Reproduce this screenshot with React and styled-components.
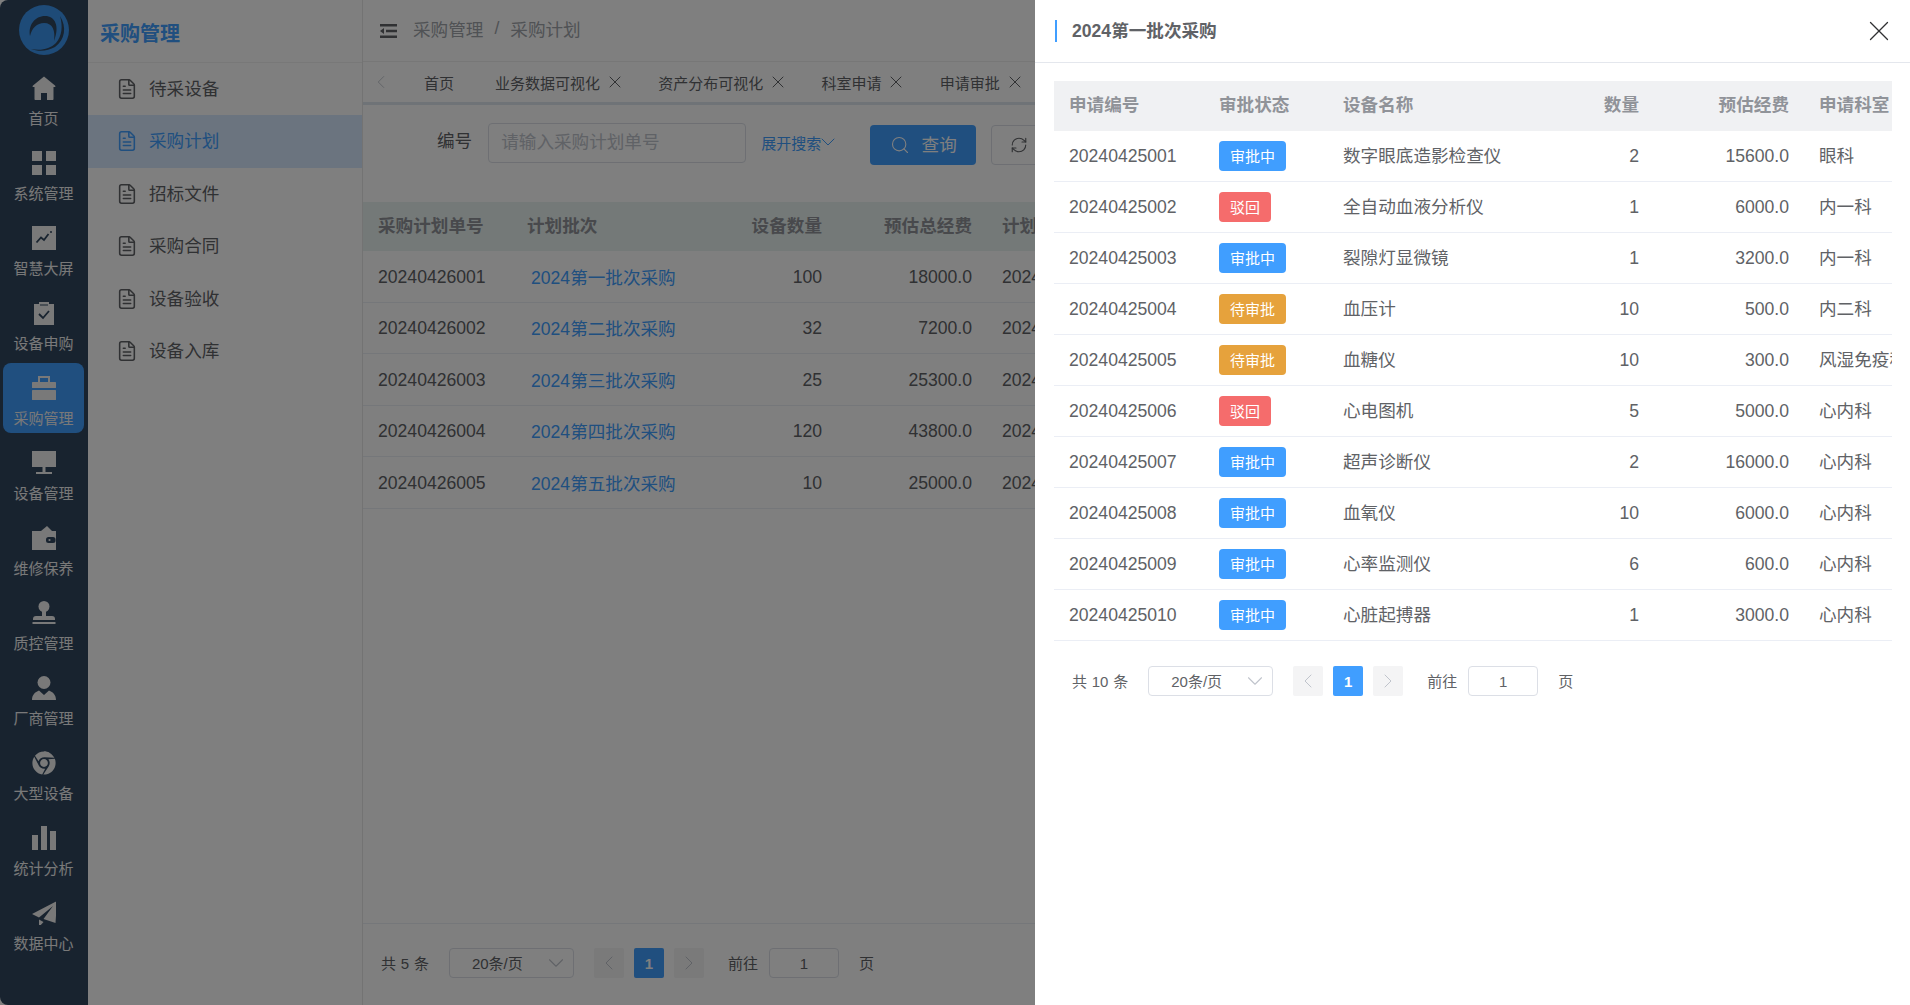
import React from 'react';
import styled, { createGlobalStyle } from 'styled-components';
import { ChevronDown, ChevronLeft, ChevronRight, FileText, RefreshCw, Search, X } from 'lucide-react';
import { FaChrome } from 'react-icons/fa';

const GlobalStyle = createGlobalStyle`
  html, body {
    margin: 0;
    padding: 0;
    height: 100%;
    overflow: hidden;
    background: #fff;
  }
  * { box-sizing: border-box; }
  body {
    font-family: "Liberation Sans", "Noto Sans CJK SC", sans-serif;
    color: #606266;
  }
`;

const Page = styled.div`
  display: flex;
  width: 100vw;
  height: 100vh;
  overflow: hidden;
`;

const Sidebar = styled.aside`
  flex: 0 0 88px;
  background: #30465e;
  border-radius: 8px 0 0 8px;
`;

const LogoWrap = styled.div`
  height: 63px;
  padding: 5px 0 0 19px;
`;

const NavItem = styled.div`
  height: 70px;
  margin: 0 4px 5px 3px;
  padding-top: 13px;
  border-radius: 8px;
  display: flex;
  flex-direction: column;
  align-items: center;
  color: #f2f2f2;
  background: ${props => (props.$active ? '#409eff' : 'transparent')};

  svg {
    width: 24px;
    height: 24px;
    fill: currentColor;
    display: block;
  }
`;

const NavLabel = styled.span`
  margin-top: 9px;
  font-size: 15px;
  line-height: 20px;
  white-space: nowrap;
`;

const SubMenu = styled.nav`
  flex: 0 0 275px;
  border-right: 1px solid #e6e6e6;
`;

const SubTitle = styled.div`
  height: 62.5px;
  padding: 4px 0 0 12px;
  display: flex;
  align-items: center;
  font-size: 20px;
  font-weight: 700;
  color: #409eff;
  border-bottom: 1px solid #f0f0f0;
`;

const SubItem = styled.div`
  height: 52.5px;
  padding-left: 28px;
  display: flex;
  align-items: center;
  gap: 11px;
  font-size: 17.6px;
  color: ${props => (props.$active ? '#409eff' : '#606266')};
  background: ${props => (props.$active ? '#d6e9ff' : 'transparent')};

  span { padding-bottom: 3px; }
`;

const Main = styled.main`
  flex: 1;
  min-width: 0;
  display: flex;
  flex-direction: column;
`;

const TopBar = styled.header`
  height: 62px;
  flex: none;
  padding-left: 17px;
  display: flex;
  align-items: center;
  gap: 16px;
  border-bottom: 1px solid #eee;
`;

const Crumbs = styled.div`
  display: flex;
  align-items: center;
  gap: 11px;
  padding-bottom: 4px;
  font-size: 17.6px;
  color: #a0a4aa;
`;

const Tabs = styled.div`
  height: 43px;
  flex: none;
  padding-left: 7px;
  display: flex;
  align-items: center;
  font-size: 15px;
  border-bottom: 3px solid #dfe6ef;
  white-space: nowrap;
  color: #606266;
`;

const TabArrow = styled.span`
  display: flex;
  width: 54px;
  color: #c0c4cc;
`;

const Tab = styled.span`
  display: flex;
  align-items: center;
  gap: 5px;
  margin-right: ${props => (props.$home ? '41px' : '33.2px')};
`;

const SearchBar = styled.div`
  height: 97px;
  flex: none;
  padding: 18px 0 0 74px;
  display: flex;
  align-items: flex-start;
`;

const FieldLabel = styled.label`
  height: 40px;
  line-height: 37px;
  margin-right: 16px;
  font-size: 17.6px;
`;

const TextField = styled.div`
  width: 258px;
  height: 40px;
  padding: 0 0 5px 12px;
  display: flex;
  align-items: center;
  font-size: 17.6px;
  color: #c0c4cc;
  border: 1px solid #dcdfe6;
  border-radius: 4px;
`;

const Expand = styled.span`
  width: 109px;
  height: 38px;
  margin-left: 15px;
  display: flex;
  align-items: center;
  font-size: 15px;
  color: #409eff;

  svg { margin-left: -5px; }
`;

const SearchButton = styled.button`
  width: 106px;
  height: 40px;
  margin-top: 2px;
  padding: 0 0 4px;
  display: flex;
  align-items: center;
  justify-content: center;
  gap: 12px;
  font: inherit;
  font-size: 17.6px;
  color: #fff;
  background: #409eff;
  border: none;
  border-radius: 4px;

  svg { margin-top: 4px; }
`;

const ResetButton = styled.button`
  width: 56px;
  height: 40px;
  margin: 2px 0 0 15px;
  display: flex;
  align-items: center;
  justify-content: center;
  color: #606266;
  background: #fff;
  border: 1px solid #dcdfe6;
  border-radius: 4px;
`;

const Grid = styled.div`
  display: grid;
  grid-template-columns: ${props => props.$columns};
  height: ${props => props.$height};
  align-items: center;
  font-size: 17.6px;
  white-space: nowrap;
`;

const HeadRow = styled(Grid)`
  background: ${props => props.$bg};
  color: #909399;
  font-weight: 700;
  padding-bottom: 5px;
`;

const BodyRow = styled(Grid)`
  border-bottom: 1px solid #ebeef5;
`;

const Cell = styled.div`
  min-width: 0;
  overflow: hidden;
  padding: ${props => (props.$clip ? '0 0 0 15px' : '0 15px')};
  padding-top: ${props => (props.$low ? '2px' : '0')};
  padding-bottom: ${props => (props.$cjk ? '3px' : '0')};
  text-align: ${props => (props.$right ? 'right' : 'left')};
`;

const PlanLink = styled.a`
  margin-left: 4px;
  color: #409eff;
`;

const MainTable = styled.div`
  flex: 1;
  min-height: 0;
`;

const MainFooter = styled.div`
  height: 82px;
  flex: none;
  padding: 24px 0 0 18px;
  border-top: 1px solid #ebeef5;
`;

const Pager = styled.div`
  display: flex;
  align-items: center;
  height: 30px;
  font-size: 15px;
  word-spacing: 0.6px;
  white-space: nowrap;
`;

const PagerText = styled.span`
  padding-bottom: 2px;
  margin-left: ${props => (props.$jump ? '14px' : '0')};
`;

const PageSize = styled.div`
  width: 125px;
  height: 30px;
  margin: 0 20px;
  padding: 0 4px 2px 22px;
  display: flex;
  align-items: center;
  justify-content: space-between;
  border: 1px solid #dcdfe6;
  border-radius: 4px;

  svg { color: #c0c4cc; margin-top: 2px; }
`;

const PageButton = styled.span`
  width: 30px;
  height: 30px;
  margin-right: 10px;
  display: flex;
  align-items: center;
  justify-content: center;
  border-radius: 2px;
  font-weight: 700;
  color: ${props => (props.$current ? '#fff' : '#c0c4cc')};
  background: ${props => (props.$current ? '#409eff' : '#f4f4f5')};
`;

const JumpInput = styled.span`
  width: 70px;
  height: 30px;
  margin: 0 20px 0 11px;
  display: flex;
  align-items: center;
  justify-content: center;
  border: 1px solid #dcdfe6;
  border-radius: 4px;
`;

const Overlay = styled.div`
  position: fixed;
  inset: 0;
  background: rgba(0, 0, 0, 0.5);
`;

const Drawer = styled.section`
  position: fixed;
  top: 0;
  right: 0;
  bottom: 0;
  width: 875px;
  background: #fff;
`;

const DrawerHead = styled.div`
  height: 63px;
  padding: 0 14px 0 20px;
  display: flex;
  align-items: center;
  justify-content: space-between;
  border-bottom: 1px solid #e4e7ed;
  color: #303133;
`;

const DrawerTitle = styled.h2`
  margin: 0;
  padding-left: 15px;
  font-size: 17.6px;
  line-height: 22px;
  font-weight: 700;
  color: #606266;
  border-left: 2px solid #409eff;
`;

const DrawerBody = styled.div`
  padding: 18px 18px 0 19px;
`;

const DrawerPager = styled.div`
  padding: 25px 0 0 18px;
`;

const Tag = styled.span`
  display: inline-flex;
  align-items: center;
  height: 30px;
  margin-top: 3px;
  padding: 0 11px 2px;
  font-size: 15px;
  color: #fff;
  border-radius: 4px;
  background: ${props => props.$color};
`;

const Logo = () => (
  <svg width="50" height="50" viewBox="0 0 50 50">
    <circle cx="25" cy="25" r="25" fill="#3c96f0" />
    <path d="M11 31C9 20 16 11 26 11c10 0 15 10 9 25 1.500-10-1-18-10-18-7 0-12 5-14 13z" fill="#30465e" />
    <path d="M41 11c7 11 5 24-5 31-7 4-16 5-24 2 10 2 19 0 25-6 6-7 7-17 4-27z" fill="#30465e" />
  </svg>
);

const dark = '#30465e';

const icons = {
  home: (
    <svg viewBox="0 0 24 24"><path d="M12 0.500 1 9.500c-.6.500-.6 1.500 0 1.500h1.500v12c0 .6.400 1 1 1H9v-7h6v7h5.500c.6 0 1-.4 1-1V11H23c.6 0 .6-1 0-1.500z" /></svg>
  ),
  grid: (
    <svg viewBox="0 0 24 24"><rect width="10" height="10" /><rect x="14" width="10" height="10" /><rect y="14" width="10" height="10" /><rect x="14" y="14" width="10" height="10" /></svg>
  ),
  chart: (
    <svg viewBox="0 0 24 24"><rect width="24" height="24" /><path d="M4.500 16.500 9 11.500l3 2.500 4.500-6" fill="none" stroke={dark} strokeWidth="1.800" /><circle cx="19" cy="6" r="1" fill={dark} /></svg>
  ),
  claim: (
    <svg viewBox="0 0 24 24"><path d="M2 3h5V1h10v2h5v21H2z" /><path d="M7 13l4 4 6-7" fill="none" stroke={dark} strokeWidth="1.800" /><rect x="8" y="3.500" width="8" height="1" fill={dark} /></svg>
  ),
  case: (
    <svg viewBox="0 0 24 24"><path d="M7 6V1h10v5" fill="none" stroke="currentColor" strokeWidth="2" /><rect y="6" width="24" height="6" rx=".5" /><rect y="14" width="24" height="10" rx=".5" /></svg>
  ),
  monitor: (
    <svg viewBox="0 0 24 24"><rect width="24" height="16" /><rect x="10.500" y="16" width="3" height="5" /><rect x="4" y="21" width="16" height="2" /></svg>
  ),
  wallet: (
    <svg viewBox="0 0 24 24"><rect y="5" width="24" height="19" /><path d="M9 5 15 0l5 5z" /><rect x="14" y="11" width="9.500" height="6" rx="2.500" fill={dark} /><circle cx="17.500" cy="14" r="1.100" /></svg>
  ),
  stamp: (
    <svg viewBox="0 0 24 24"><circle cx="12" cy="5.500" r="5.500" /><rect x="10" y="9" width="4" height="6" /><path d="M1 18c0-2 1-3 3-3h16c2 0 3 1 3 3v1H1z" /><rect x="0.500" y="21" width="23" height="2" /></svg>
  ),
  person: (
    <svg viewBox="0 0 24 24"><circle cx="12" cy="6.500" r="6.500" /><path d="M0 24c0-5 3-8 7-9.500L12 19l5-4.500c4 1.500 7 4.500 7 9.500z" /></svg>
  ),
  chrome: <FaChrome />,
  bars: (
    <svg viewBox="0 0 24 24"><rect y="9" width="6" height="15" /><rect x="9" width="6" height="24" /><rect x="18" y="5" width="6" height="19" /></svg>
  ),
  plane: (
    <svg viewBox="0 0 24 24"><path d="M25 0 0 13l7 3.500L21 5 11.500 18l12 4z" /><path d="M7 18.500V26l4.500-5z" /></svg>
  ),
};

const navItems = [
  ['home', '首页'],
  ['grid', '系统管理'],
  ['chart', '智慧大屏'],
  ['claim', '设备申购'],
  ['case', '采购管理', true],
  ['monitor', '设备管理'],
  ['wallet', '维修保养'],
  ['stamp', '质控管理'],
  ['person', '厂商管理'],
  ['chrome', '大型设备'],
  ['bars', '统计分析'],
  ['plane', '数据中心'],
];

const subItems = ['待采设备', '采购计划', '招标文件', '采购合同', '设备验收', '设备入库'];

const tabs = ['业务数据可视化', '资产分布可视化', '科室申请', '申请审批'];

const plans = [
  ['20240426001', '2024第一批次采购', '100', '18000.0', '2024-04-26'],
  ['20240426002', '2024第二批次采购', '32', '7200.0', '2024-04-26'],
  ['20240426003', '2024第三批次采购', '25', '25300.0', '2024-04-26'],
  ['20240426004', '2024第四批次采购', '120', '43800.0', '2024-04-26'],
  ['20240426005', '2024第五批次采购', '10', '25000.0', '2024-04-26'],
];

const statusColors = { 审批中: '#409eff', 驳回: '#f56c6c', 待审批: '#e6a23c' };

const requests = [
  ['20240425001', '审批中', '数字眼底造影检查仪', '2', '15600.0', '眼科'],
  ['20240425002', '驳回', '全自动血液分析仪', '1', '6000.0', '内一科'],
  ['20240425003', '审批中', '裂隙灯显微镜', '1', '3200.0', '内一科'],
  ['20240425004', '待审批', '血压计', '10', '500.0', '内二科'],
  ['20240425005', '待审批', '血糖仪', '10', '300.0', '风湿免疫科'],
  ['20240425006', '驳回', '心电图机', '5', '5000.0', '心内科'],
  ['20240425007', '审批中', '超声诊断仪', '2', '16000.0', '心内科'],
  ['20240425008', '审批中', '血氧仪', '10', '6000.0', '心内科'],
  ['20240425009', '审批中', '心率监测仪', '6', '600.0', '心内科'],
  ['20240425010', '审批中', '心脏起搏器', '1', '3000.0', '心内科'],
];

const planColumns = '149px 175px 150px 150px 150px';
const requestColumns = '150px 124px 226px 100px 150px 88px';

const Pagination = ({ total }) => (
  <Pager>
    <PagerText>共 {total} 条</PagerText>
    <PageSize>
      20条/页
      <ChevronDown size={26} strokeWidth={1} />
    </PageSize>
    <PageButton><ChevronLeft size={24} strokeWidth={1} /></PageButton>
    <PageButton $current>1</PageButton>
    <PageButton><ChevronRight size={24} strokeWidth={1} /></PageButton>
    <PagerText $jump>前往</PagerText>
    <JumpInput>1</JumpInput>
    <PagerText>页</PagerText>
  </Pager>
);

const App = () => (
  <Page>
    <GlobalStyle />
    <Sidebar>
      <LogoWrap><Logo /></LogoWrap>
      {navItems.map(([icon, label, active]) => (
        <NavItem key={label} $active={active}>
          {icons[icon]}
          <NavLabel>{label}</NavLabel>
        </NavItem>
      ))}
    </Sidebar>

    <SubMenu>
      <SubTitle>采购管理</SubTitle>
      {subItems.map(item => (
        <SubItem key={item} $active={item === '采购计划'}>
          <FileText size={22} strokeWidth={1.7} />
          <span>{item}</span>
        </SubItem>
      ))}
    </SubMenu>

    <Main>
      <TopBar>
        <svg width="17" height="14" viewBox="0 0 17 14">
          <path d="M0 1.250h17M6 7h11M0 12.750h17" stroke="#606266" strokeWidth="2.500" />
          <path d="M0 7l4-3v6z" fill="#606266" />
        </svg>
        <Crumbs>
          <span>采购管理</span>
          <span>/</span>
          <span>采购计划</span>
        </Crumbs>
      </TopBar>

      <Tabs>
        <TabArrow><ChevronLeft size={22} strokeWidth={1} /></TabArrow>
        <Tab $home>首页</Tab>
        {tabs.map(tab => (
          <Tab key={tab}>
            {tab}
            <X size={20} strokeWidth={1.2} />
          </Tab>
        ))}
      </Tabs>

      <SearchBar>
        <FieldLabel>编号</FieldLabel>
        <TextField>请输入采购计划单号</TextField>
        <Expand>
          展开搜索
          <ChevronDown size={24} strokeWidth={1} />
        </Expand>
        <SearchButton>
          <Search size={20} strokeWidth={1.3} />
          查询
        </SearchButton>
        <ResetButton><RefreshCw size={18} strokeWidth={1.5} /></ResetButton>
      </SearchBar>

      <MainTable>
        <HeadRow $columns={planColumns} $height="49px" $bg="#e8f2f0">
          <Cell>采购计划单号</Cell>
          <Cell>计划批次</Cell>
          <Cell $right>设备数量</Cell>
          <Cell $right>预估总经费</Cell>
          <Cell>计划日期</Cell>
        </HeadRow>
        {plans.map(plan => (
          <BodyRow key={plan[0]} $columns={planColumns} $height="51.5px">
            <Cell $low>{plan[0]}</Cell>
            <Cell><PlanLink>{plan[1]}</PlanLink></Cell>
            <Cell $low $right>{plan[2]}</Cell>
            <Cell $low $right>{plan[3]}</Cell>
            <Cell $low>{plan[4]}</Cell>
          </BodyRow>
        ))}
      </MainTable>

      <MainFooter>
        <Pagination total={5} />
      </MainFooter>
    </Main>

    <Overlay />

    <Drawer>
      <DrawerHead>
        <DrawerTitle>2024第一批次采购</DrawerTitle>
        <X size={34} strokeWidth={0.9} />
      </DrawerHead>
      <DrawerBody>
        <HeadRow $columns={requestColumns} $height="50px" $bg="#f0f1f3">
          <Cell>申请编号</Cell>
          <Cell>审批状态</Cell>
          <Cell>设备名称</Cell>
          <Cell $right>数量</Cell>
          <Cell $right>预估经费</Cell>
          <Cell $clip>申请科室</Cell>
        </HeadRow>
        {requests.map(row => (
          <BodyRow key={row[0]} $columns={requestColumns} $height="51px">
            <Cell>{row[0]}</Cell>
            <Cell $cjk><Tag $color={statusColors[row[1]]}>{row[1]}</Tag></Cell>
            <Cell $cjk>{row[2]}</Cell>
            <Cell $right>{row[3]}</Cell>
            <Cell $right>{row[4]}</Cell>
            <Cell $clip $cjk>{row[5]}</Cell>
          </BodyRow>
        ))}
        <DrawerPager>
          <Pagination total={10} />
        </DrawerPager>
      </DrawerBody>
    </Drawer>
  </Page>
);

export default App;
